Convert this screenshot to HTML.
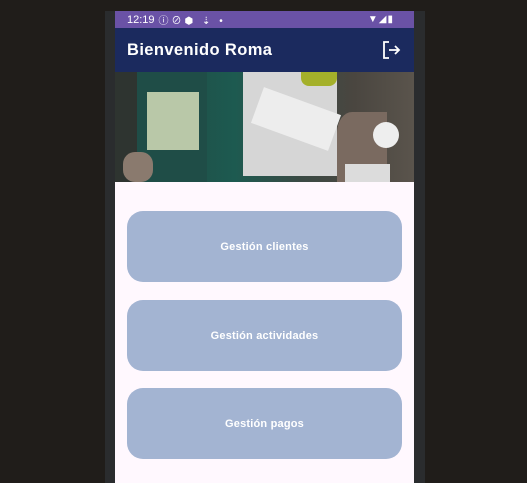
<!DOCTYPE html>
<html><head><meta charset="utf-8"><style>
*{margin:0;padding:0;box-sizing:border-box}
body{width:527px;height:483px;background:#201d1a;position:relative;overflow:hidden;font-family:"Liberation Sans",sans-serif}
.frame{position:absolute;left:105px;top:11px;width:320px;height:472px;background:#2a2c2e}
.screen{position:absolute;left:115px;top:11px;width:299px;height:472px;background:#fff8fe;overflow:hidden}
.status{height:17px;background:#6a52a6;color:#fff;font-size:11px;display:flex;align-items:center;padding-left:12px;position:relative}
.appbar{height:44px;background:#1b2a5e;color:#fff;font-size:16.5px;font-weight:600;display:flex;align-items:center;padding-left:12px;position:relative;letter-spacing:0.4px}
.img{height:110px;position:relative;overflow:hidden;background:linear-gradient(90deg,#3a3e38 0%,#1f4a44 12%,#1d5a50 40%,#3a4a44 62%,#4a4640 80%,#5a544c 100%)}
.btn{position:absolute;left:12px;width:275px;height:71px;background:#a3b4d2;border-radius:16px;color:#fff;font-size:11px;font-weight:600;display:flex;align-items:center;justify-content:center;letter-spacing:0.2px}
</style></head><body>
<div class="frame"></div>
<div class="screen">
 <div class="status"><span>12:19</span><span style="margin-left:4px;font-size:10px;letter-spacing:3px">ⓘ⊘⬢ ⇣ •</span>
  <span style="position:absolute;right:20px;font-size:10px;letter-spacing:1px">▼◢▮</span></div>
 <div class="appbar">Bienvenido Roma
  <svg style="position:absolute;right:13px;top:12px" width="20" height="20" viewBox="0 0 20 20" fill="none" stroke="#fff" stroke-width="1.8"><path d="M8 2H3v16h5"/><path d="M8 10h10M14 6l4 4-4 4"/></svg>
 </div>
 <div class="img">
  <div style="position:absolute;left:0;top:0;width:22px;height:110px;background:#2e3430"></div>
  <div style="position:absolute;left:22px;top:0;width:70px;height:110px;background:#1f4d47"></div>
  <div style="position:absolute;left:8px;top:80px;width:30px;height:30px;background:#8a7a6e;border-radius:40%"></div>
  <div style="position:absolute;left:32px;top:20px;width:52px;height:58px;background:#b9c8a8"></div>
  <div style="position:absolute;left:128px;top:0;width:94px;height:104px;background:#d6d6d6"></div>
  <div style="position:absolute;left:140px;top:28px;width:82px;height:38px;background:#ededed;transform:rotate(20deg)"></div>
  <div style="position:absolute;left:186px;top:0;width:36px;height:14px;background:#a4b02a;border-radius:0 0 8px 8px"></div>
  <div style="position:absolute;left:222px;top:40px;width:50px;height:70px;background:#7a6a60;border-radius:30% 0 0 0"></div>
  <div style="position:absolute;left:258px;top:50px;width:26px;height:26px;background:#eee;border-radius:50%"></div>
  <div style="position:absolute;left:230px;top:92px;width:45px;height:18px;background:#dcdcdc"></div>
 </div>
 <div class="btn" style="top:200px">Gestión clientes</div>
 <div class="btn" style="top:289px">Gestión actividades</div>
 <div class="btn" style="top:377px">Gestión pagos</div>
</div>
</body></html>
